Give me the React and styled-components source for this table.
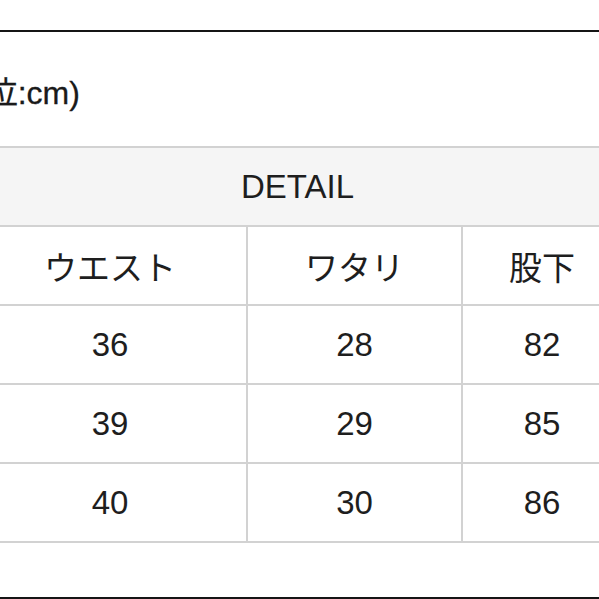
import React from "react";
import styled, { createGlobalStyle } from "styled-components";

const Global = createGlobalStyle`
  html, body { margin: 0; padding: 0; background: #fff; }
  body { font-family: "Liberation Sans", "Noto Sans CJK JP", sans-serif; }
`;

const Page = styled.div`
  width: 599px;
  height: 599px;
  overflow: hidden;
  background: #fff;
  display: flex;
  flex-direction: column;
  padding-top: 30px;
  box-sizing: border-box;
`;

const Rule = styled.div`
  height: 2px;
  flex: none;
  background: #151515;
  width: 100%;
`;

const Caption = styled.div`
  margin: 44px 0 0 -57px;
  font-size: 32px;
  line-height: 34px;
  color: #1a1a1a;
  white-space: nowrap;
  -webkit-text-stroke: 0.3px #1a1a1a;
`;

const Grid = styled.div`
  margin: 36px 0 0 -28px;
  display: grid;
  grid-template-columns: 272px 213px 158px;
  grid-auto-rows: 77px;
  gap: 2px;
  padding: 2px;
  background: #d2d2d2;
  width: max-content;
  flex: none;
`;

const Cell = styled.div`
  display: flex;
  align-items: center;
  justify-content: center;
  background: ${(p) => (p.$head ? "#f5f5f5" : "#fff")};
  grid-column: ${(p) => (p.$span ? `span ${p.$span}` : "auto")};
  font-size: 33px;
  color: #1e1e1e;
  font-family: "Liberation Sans", "Noto Sans CJK JP", sans-serif;
`;

const Spacer = styled.div`
  flex: 1;
`;

const rows = [
  ["ウエスト", "ワタリ", "股下"],
  ["36", "28", "82"],
  ["39", "29", "85"],
  ["40", "30", "86"],
];

export default function App() {
  return (
    <>
      <Global />
      <Page>
        <Rule />
        <Caption>(単位:cm)</Caption>
        <Grid>
          <Cell $head $span={3}>DETAIL</Cell>
          {rows.map((r, i) =>
            r.map((c, j) => <Cell key={`${i}-${j}`}>{c}</Cell>)
          )}
        </Grid>
        <Spacer />
        <Rule />
      </Page>
    </>
  );
}
